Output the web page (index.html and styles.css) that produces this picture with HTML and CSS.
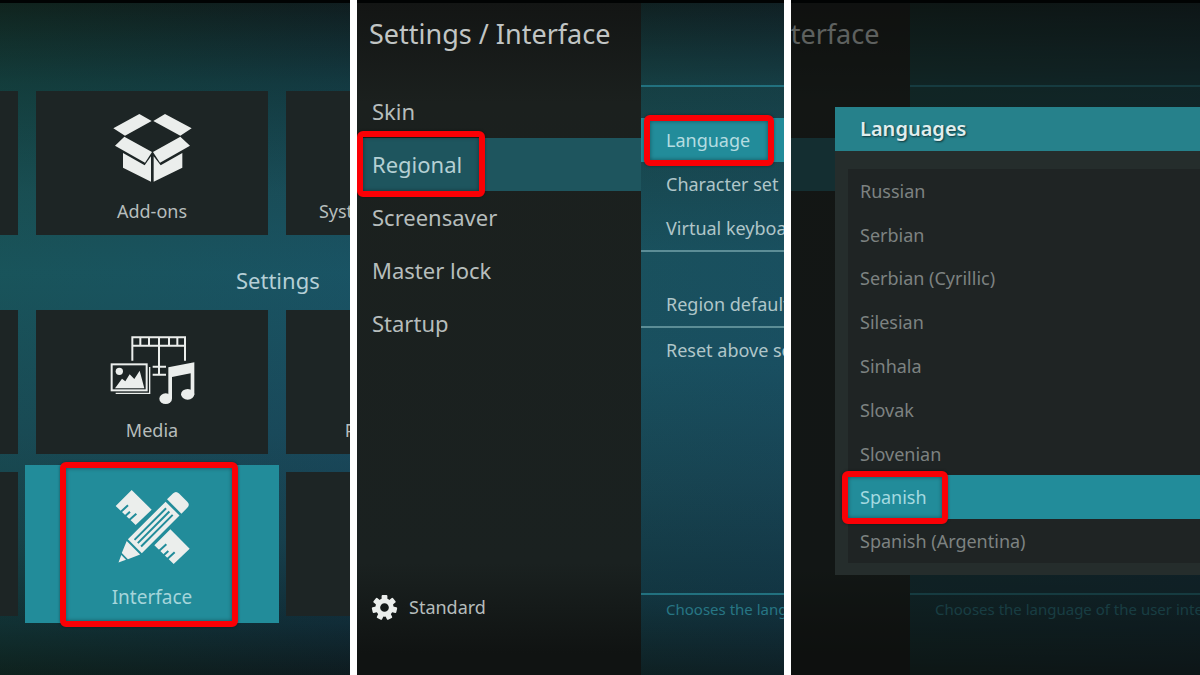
FILE: index.html
```
<!DOCTYPE html>
<html lang="en">

<head>
    <meta charset="UTF-8">
    <meta name="viewport" content="width=device-width, initial-scale=1.0">
    <title>Interface language</title>
    <link rel="stylesheet" href="styles.css">
</head>

<body>
    <main class="steps">
        <!-- Step 1: settings home -->
        <section class="screen home">
            <div class="tile-row">
                <div class="tile"></div>
                <button class="tile" type="button">
                    <svg class="tile-icon" viewBox="30 24 252 216" aria-hidden="true">
                        <path d="M40 70 118 27 155 48 75 92zM160 48 195 27 275 70 241 92z" />
                        <path d="M73 95 156 141 135 173 45 122zM241 95 270 122 180 173 159 141z" />
                        <path d="M69 144 134 181 153 154V230L69 188zM247 144 182 181 161 154V230L247 188z" />
                    </svg>
                    <span>Add-ons</span>
                </button>
                <button class="tile" type="button"><span>System information</span></button>
            </div>

            <h2 class="home-title">Settings</h2>

            <div class="tile-row">
                <div class="tile"></div>
                <button class="tile" type="button">
                    <svg class="tile-icon" viewBox="30 21 252 216" aria-hidden="true">
                        <g class="line">
                            <path d="M97 107V37H255V107M97 62H255M177 37V149M158 125H198M158 149H198" />
                            <path d="M121 37V62M147 37V62M207 37V62M232 37V62" />
                            <rect x="35" y="118" width="105" height="78" />
                            <path class="thin" d="M149 126V205H47" />
                        </g>
                        <circle cx="58" cy="139" r="11" />
                        <path d="M45 190 66 161 76 169 89 148 103 162 119 137 133 190z" />
                        <path d="M205 127 283 112V208H272V145L216 156V221H205z" />
                        <ellipse cx="197" cy="221" rx="19" ry="16" />
                        <ellipse cx="263" cy="208" rx="20" ry="16" />
                    </svg>
                    <span>Media</span>
                </button>
                <button class="tile" type="button"><span>PVR &amp; Live TV</span></button>
            </div>

            <div class="tile-row">
                <div class="tile"></div>
                <button class="tile focused" type="button">
                    <svg class="tile-icon" viewBox="30 21 252 234" aria-hidden="true">
                        <path d="M95 30 155 89 107 135 47 78zM211 148 269 206 221 252 163 196z" />
                        <path class="cut" d="M62 96 84 76M76 108 90 95M87 121 109 101M177 213 199 193M191 226 205 213M202 237 224 217" />
                        <g transform="translate(54 246) rotate(-45)">
                            <path class="halo" d="M62-28H275V32H62z" />
                            <path d="M0 2 22-8V12zM27-11 63-26V31L27 15zM69-27H229V32H69z" />
                            <path d="M237-29H262Q275-29 275-16V19Q275 32 262 32H237z" />
                            <path class="cut" d="M82-12H216M82 2H216M82 16H216" />
                        </g>
                    </svg>
                    <span>Interface</span>
                    <i class="marker"></i>
                </button>
                <div class="tile"></div>
            </div>
        </section>

        <!-- Step 2: interface settings -->
        <section class="screen settings">
            <nav class="sidebar">
                <h1 class="page-title">Settings / Interface</h1>
                <button class="category" type="button">Skin</button>
                <button class="category active" type="button">Regional<i class="marker"></i></button>
                <button class="category" type="button">Screensaver</button>
                <button class="category" type="button">Master lock</button>
                <button class="category" type="button">Startup</button>
                <button class="level" type="button">
                    <svg class="gear" viewBox="-14 -14 28 28" aria-hidden="true">
                        <defs>
                            <rect id="tooth" x="-3" y="-13" width="6" height="8" rx="1" />
                        </defs>
                        <circle r="7" />
                        <use href="#tooth" />
                        <use href="#tooth" transform="rotate(51.4)" />
                        <use href="#tooth" transform="rotate(102.9)" />
                        <use href="#tooth" transform="rotate(154.3)" />
                        <use href="#tooth" transform="rotate(205.7)" />
                        <use href="#tooth" transform="rotate(257.1)" />
                        <use href="#tooth" transform="rotate(308.6)" />
                    </svg>
                    <span>Standard</span>
                </button>
            </nav>
            <div class="content">
                <div class="options">
                    <button class="option selected" type="button">Language<i class="marker"></i></button>
                    <button class="option" type="button">Character set</button>
                    <button class="option group-end" type="button">Virtual keyboards</button>
                    <button class="option group-start group-end" type="button">Region default format</button>
                    <button class="option" type="button">Reset above settings to default</button>
                </div>
                <p class="hint">Chooses the language of the user interface.</p>
            </div>
        </section>

        <!-- Step 3: language dialog -->
        <section class="screen settings dimmed">
            <div class="sidebar">
                <h1 class="page-title">Settings / Interface</h1>
                <div class="category"></div>
                <div class="category active"></div>
            </div>
            <div class="content">
                <div class="options"></div>
                <p class="hint">Chooses the language of the user interface.</p>
            </div>
            <div class="dialog" role="dialog" aria-labelledby="dialog-title">
                <h2 class="dialog-title" id="dialog-title">Languages</h2>
                <div class="languages">
                    <button class="language" type="button">Russian</button>
                    <button class="language" type="button">Serbian</button>
                    <button class="language" type="button">Serbian (Cyrillic)</button>
                    <button class="language" type="button">Silesian</button>
                    <button class="language" type="button">Sinhala</button>
                    <button class="language" type="button">Slovak</button>
                    <button class="language" type="button">Slovenian</button>
                    <button class="language selected" type="button">Spanish<i class="marker"></i></button>
                    <button class="language" type="button">Spanish (Argentina)</button>
                </div>
            </div>
        </section>
    </main>
</body>

</html>
```
FILE: styles.css
```
* {
    box-sizing: border-box;
}

body {
    margin: 0;
    background: white;
    font-family: "Noto Sans", sans-serif;
    color: #b6bdbc;
}

h1, h2, p {
    margin: 0;
    font-weight: normal;
}

button {
    font: inherit;
    color: inherit;
    background: none;
    border: 0;
    padding: 0;
    text-align: left;
    cursor: pointer;
}

.steps {
    display: grid;
    grid-template-columns: 350fr 427fr 409fr;
    gap: 7px;
    min-height: 100vh;
}

.screen {
    position: relative;
    min-width: 0;
    overflow: hidden;
    border-top: 3px solid #010303;
    white-space: nowrap;
}

/* red frame round the thing to press */
.marker {
    position: absolute;
    border: 6px solid #fa0005;
    border-radius: 6px;
    box-shadow: 0 0 3px rgba(0, 0, 0, 0.4), inset 0 0 4px rgba(0, 0, 0, 0.4);
    z-index: 1;
}

/* settings home */
.home {
    display: flex;
    flex-direction: column;
    gap: 18px;
    padding-top: 88px;
    background:
        linear-gradient(to right, rgba(20, 75, 50, 0.2), rgba(20, 60, 90, 0.1)),
        linear-gradient(#0f1a19, #13393e 80px, #1a4f5a 190px, #1a5665 270px, #1a4a5c 430px, #173f4c 540px, #102a33 620px, #0d1718 672px);
}

.tile-row {
    display: grid;
    grid-template-columns: 18px 232px 232px;
    gap: 18px;
}

.tile {
    display: flex;
    flex-direction: column;
    align-items: center;
    justify-content: space-between;
    height: 144px;
    padding: 22px 0 12px;
    background: #1d2525;
    font-size: 18px;
    line-height: 24px;
}

.tile span {
    margin-top: auto;
}

.tile-icon {
    width: 84px;
    height: 72px;
    fill: #ebeeec;
    overflow: visible;
}

.line {
    fill: none;
    stroke: #ebeeec;
    stroke-width: 6;
}

.thin {
    stroke-width: 4;
}

.home-title {
    padding: 15px 0 0 236px;
    font-size: 22px;
    line-height: 24px;
    color: #b5cfd6;
}

.focused {
    position: relative;
    height: 158px;
    margin: -7px -11px;
    padding: 22px 0 14px;
    background: #228c9a;
    font-size: 19px;
    color: #a5d5da;
}

.focused .tile-icon {
    height: 78px;
}

.focused .marker {
    top: -3px;
    right: 41px;
    bottom: -4px;
    left: 35px;
}

.cut {
    fill: none;
    stroke: #228c9a;
    stroke-width: 6;
}

.halo {
    fill: #228c9a;
    stroke: #228c9a;
    stroke-width: 8;
}

/* interface settings */
.settings {
    display: grid;
    grid-template-columns: 284px 1fr;
    background:
        linear-gradient(to right, rgba(20, 75, 50, 0.15), rgba(20, 60, 90, 0.15)),
        linear-gradient(#0f1b1a, #163f42 85px, #184449 120px, #1a5360 250px, #1a5262 360px, #184451 480px, #12343f 590px, #0d1a1b 672px);
}

.sidebar {
    display: flex;
    flex-direction: column;
    background: linear-gradient(#131514, #1b201e 100px, #1a2120 560px, #101312 650px);
}

.page-title {
    height: 82px;
    padding-left: 12px;
    font-size: 27px;
    line-height: 62px;
    color: #c1c5c4;
}

.category {
    position: relative;
    height: 53px;
    padding-left: 15px;
    font-size: 22px;
    line-height: 53px;
}

.category.active {
    background: #1e555e;
    color: #b5d0d4;
}

.category .marker {
    top: -7px;
    bottom: -6px;
    left: 0;
    width: 128px;
}

.level {
    display: flex;
    align-items: center;
    gap: 11px;
    margin: auto 0 54px;
    padding-left: 14px;
    font-size: 18px;
    line-height: 28px;
}

.gear {
    width: 27px;
    height: 27px;
}

.gear circle {
    fill: none;
    stroke: #ebeeec;
    stroke-width: 5;
}

.gear use {
    fill: #ebeeec;
}

.content {
    display: flex;
    flex-direction: column;
    min-width: 0;
    padding-top: 82px;
}

.options {
    display: flex;
    flex: 1;
    flex-direction: column;
    padding-top: 31px;
    border-top: 2px solid #22717f;
}

.option {
    position: relative;
    height: 44px;
    padding-left: 25px;
    font-size: 18px;
    line-height: 44px;
    color: #b0c6c9;
}

.group-end {
    height: 46px;
    border-bottom: 2px solid #5c8d96;
}

.group-start {
    margin-top: 30px;
}

.selected {
    background: #228c9a;
    color: #b5dde1;
}

.option .marker {
    top: -3px;
    bottom: -4px;
    left: 3px;
    width: 130px;
}

.hint {
    height: 82px;
    padding-left: 25px;
    border-top: 2px solid #22717f;
    font-size: 15px;
    line-height: 29px;
    color: #277684;
}

/* language dialog over the dimmed settings screen */
.dimmed .sidebar {
    margin-left: -165px;
}

.dimmed {
    grid-template-columns: 119px 1fr;
}

.dimmed::before {
    content: "";
    position: absolute;
    inset: 0;
    background: rgba(12, 14, 12, 0.55);
    z-index: 1;
}

.dialog {
    position: absolute;
    top: 104px;
    right: 0;
    bottom: 100px;
    left: 44px;
    display: flex;
    flex-direction: column;
    padding: 0 0 12px 13px;
    background: #252d2c;
    z-index: 2;
}

.dialog-title {
    margin: 0 0 18px -13px;
    padding-left: 25px;
    background: #26818b;
    font-size: 20px;
    font-weight: 600;
    line-height: 44px;
    color: #e0eeee;
    text-shadow: 1px 1px 2px rgba(0, 0, 0, 0.6);
}

.languages {
    display: grid;
    flex: 1;
    grid-auto-rows: 1fr;
    background: #1f2424;
}

.language {
    position: relative;
    padding-left: 12px;
    font-size: 18px;
    color: #7d8281;
}

.language.selected {
    color: #a5dae0;
}

.language .marker {
    top: -4px;
    bottom: -5px;
    left: -6px;
    width: 106px;
}
```
